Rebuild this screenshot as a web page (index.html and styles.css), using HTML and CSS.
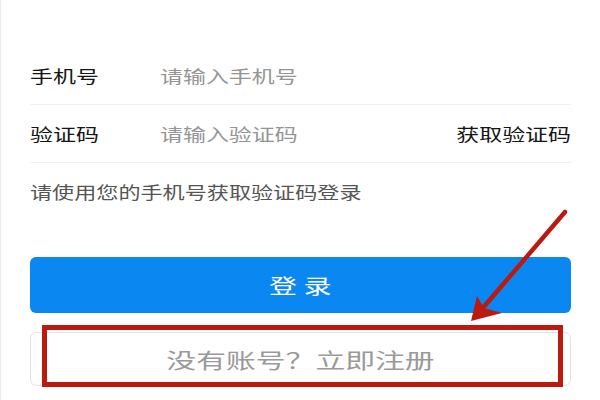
FILE: index.html
```html
<!DOCTYPE html>
<html lang="zh-CN">
<head>
<meta charset="utf-8">
<title>登录</title>
<link rel="stylesheet" href="styles.css">
</head>
<body>
<div class="page">
  <div class="form">
    <div class="row">
      <div class="label"><span class="s">手机号</span></div>
      <div class="field"><span class="s ph">请输入手机号</span></div>
    </div>
    <div class="row">
      <div class="label"><span class="s">验证码</span></div>
      <div class="field"><span class="s ph">请输入验证码</span></div>
      <div class="code"><span class="s sr">获取验证码</span></div>
    </div>
    <div class="hint"><span class="s">请使用您的手机号获取验证码登录</span></div>
    <div class="btn-login"><span class="s sc">登 录</span></div>
    <div class="btn-reg"><span class="s sc">没有账号？立即注册</span></div>
  </div>
  <div class="mark"></div>
  <svg class="arrow" width="600" height="400" viewBox="0 0 600 400">
    <line x1="565" y1="212" x2="482" y2="309" stroke="#bb1a10" stroke-width="4.5" stroke-linecap="round"/>
    <polygon points="471,321 477,296 484,308 502,313" fill="#bb1a10"/>
  </svg>
</div>
</body>
</html>
```
FILE: styles.css
```css
html, body {
  margin: 0;
  padding: 0;
  background: #ffffff;
}
.page {
  position: relative;
  width: 600px;
  height: 400px;
  box-sizing: border-box;
  border-left: 1px solid #ececec;
  font-family: "Noto Sans CJK SC", "Noto Sans", sans-serif;
  overflow: hidden;
}
.form {
  padding: 47px 29px 0 29px;
  display: flex;
  flex-direction: column;
}
.s {
  display: inline-block;
  white-space: nowrap;
  transform: scaleX(1.35);
  transform-origin: left center;
}
.sr { transform-origin: right center; }
.sc { transform-origin: center center; }
.row {
  display: flex;
  align-items: center;
  height: 57px;
  border-bottom: 1px solid #f1f1f1;
  font-size: 17px;
  line-height: 24px;
  color: #151515;
}
.label {
  width: 130px;
  flex: none;
}
.field {
  flex: 1;
}
.ph {
  color: #959595;
}
.code {
  flex: none;
  width: 120px;
  text-align: right;
}
.hint {
  margin-top: 17px;
  font-size: 17px;
  line-height: 24px;
  color: #555555;
}
.hint .s { transform: scaleX(1.3); }
.btn-login {
  margin-top: 53px;
  height: 56px;
  border-radius: 6px;
  background: #0a87f0;
  color: #ffffff;
  font-size: 20px;
  display: flex;
  align-items: center;
  justify-content: center;
}
.btn-login .s { transform: scaleX(1.4); }
.btn-reg {
  margin-top: 19px;
  height: 54px;
  box-sizing: border-box;
  border: 1px solid #e2e2e2;
  border-radius: 6px;
  color: #9a9a9a;
  font-size: 21px;
  display: flex;
  align-items: center;
  justify-content: center;
}
.btn-reg .s { transform: scaleX(1.42); }
.mark {
  position: absolute;
  left: 41px;
  top: 325px;
  width: 521px;
  height: 62px;
  box-sizing: border-box;
  border: 5px solid #bb1a10;
}
.arrow {
  position: absolute;
  left: -1px;
  top: 0;
}
```
